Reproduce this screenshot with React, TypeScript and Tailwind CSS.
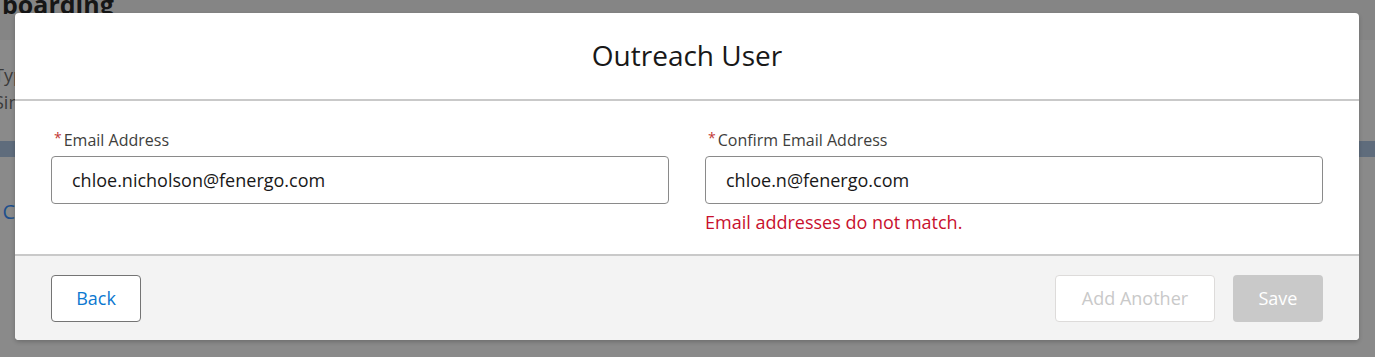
import React from "react";

const font = { fontFamily: '"Open Sans", "Noto Sans", sans-serif' };

// Labeled email field with optional error line
function EmailField({ label, value, error }: { label: string; value: string; error?: string }) {
  return (
    <div className="flex-1">
      <label className="flex items-center text-[16px] leading-[20px] text-[#3e3e3c] pl-[3px]">
        <span className="text-[#c23934] text-[14px] mr-[2px] -mt-[4px]">*</span>
        {label}
      </label>
      <div className="mt-[6px] h-[48px] rounded-[4px] border border-[#8a8a8a] bg-white flex items-center px-[20px] text-[18px] text-[#181818]">
        {value}
      </div>
      {error && <p className="mt-[6px] text-[18px] leading-[24px] text-[#c8102e]">{error}</p>}
    </div>
  );
}

export default function App() {
  return (
    <div className="relative w-[1375px] h-[357px] overflow-hidden bg-[#8a8a8a]" style={font}>
      {/* dimmed page behind the modal */}
      <div className="h-[40px] bg-[#858585] overflow-hidden">
        <h1 className="text-[25px] font-bold leading-[26px] -mt-[9px] pl-[2px] text-[#161616]">boarding</h1>
      </div>
      <div className="h-[101px] pt-[22px] text-[18px] leading-[27px] text-[#3a3a3a] -ml-[6px]">
        <p>Typ</p>
        <p>Sim</p>
      </div>
      <div className="h-[16px] bg-[#5f6c7c]"></div>
      <p className="mt-[40px] text-[20px] text-[#1d4f8c] -ml-[10px]">/ C</p>

      {/* modal */}
      <div className="absolute left-[15px] top-[13px] w-[1344px] h-[327px] rounded-[4px] bg-white shadow-[0_2px_4px_rgba(0,0,0,0.2)] flex flex-col overflow-hidden">
        <div className="h-[88px] flex items-center justify-center border-b-2 border-[#c9c9c9]">
          <h2 className="text-[28px] text-[#181818] pb-[2px]">Outreach User</h2>
        </div>
        <div className="h-[155px] flex gap-[36px] px-[36px] pt-[29px] border-b-2 border-[#c9c9c9]">
          <EmailField label="Email Address" value="chloe.nicholson@fenergo.com" />
          <EmailField
            label="Confirm Email Address"
            value="chloe.n@fenergo.com"
            error="Email addresses do not match."
          />
        </div>
        <div className="flex-1 bg-[#f3f3f3] flex items-center justify-between px-[36px] pt-[1px]">
          <button className="w-[90px] h-[47px] rounded-[4px] border border-[#747474] bg-white text-[18px] text-[#0b78d0]">
            Back
          </button>
          <div className="flex gap-[18px]">
            <button className="w-[160px] h-[47px] rounded-[4px] border border-[#dddbda] bg-white text-[18px] text-[#c9c9c9]">
              Add Another
            </button>
            <button className="w-[90px] h-[47px] rounded-[4px] bg-[#c9c9c9] text-[18px] text-white">
              Save
            </button>
          </div>
        </div>
      </div>
    </div>
  );
}
